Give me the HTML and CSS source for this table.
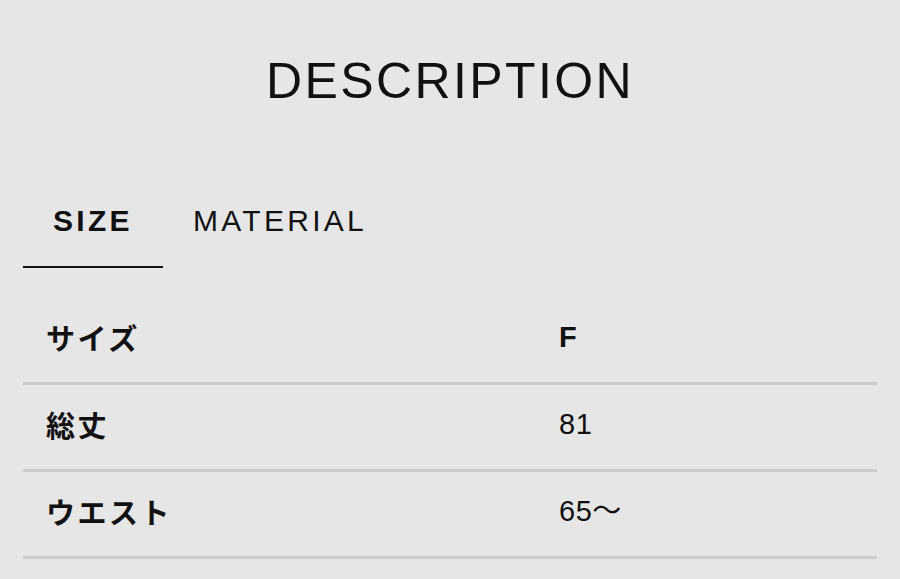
FILE: index.html
```html
<!DOCTYPE html>
<html lang="ja">
<head>
<meta charset="utf-8">
<title>Description</title>
<link rel="stylesheet" href="styles.css">
</head>
<body>
<main class="page">
  <h1 class="title">DESCRIPTION</h1>
  <nav class="tabs">
    <div class="tab tab-active">SIZE</div>
    <div class="tab">MATERIAL</div>
  </nav>
  <div class="table">
    <div class="row">
      <div class="label">サイズ</div>
      <div class="value value-bold">F</div>
    </div>
    <div class="row">
      <div class="label">総丈</div>
      <div class="value">81</div>
    </div>
    <div class="row">
      <div class="label">ウエスト</div>
      <div class="value">65〜</div>
    </div>
  </div>
</main>
</body>
</html>
```

FILE: styles.css
```css
html, body {
  margin: 0;
  padding: 0;
  background: #e6e6e6;
}

body {
  font-family: "Liberation Sans", Arial, "Noto Sans CJK JP", sans-serif;
  color: #111111;
}

.page {
  padding: 51px 23px 0 23px;
}

.title {
  margin: 0;
  font-size: 50px;
  line-height: 60px;
  font-weight: 400;
  letter-spacing: 2.4px;
  text-align: center;
  padding-left: 0;
}

.tabs {
  display: flex;
  margin-top: 92px;
}

.tab {
  font-size: 30px;
  line-height: 36px;
  letter-spacing: 3.3px;
  padding: 0 30px 27px 30px;
  border-bottom: 2px solid transparent;
}

.tab-active {
  font-weight: 700;
  border-bottom-color: #111111;
}

.table {
  margin-top: 30px;
}

.row {
  display: grid;
  grid-template-columns: 513px 1fr;
  align-items: center;
  height: 87px;
  padding: 0 0 6px 23px;
  box-sizing: border-box;
  border-bottom: 3px solid #cbcbcb;
}

.label {
  font-family: "Noto Sans CJK JP", sans-serif;
  font-weight: 700;
  font-size: 29px;
  letter-spacing: 2.5px;
  line-height: 36px;
}

.value {
  font-size: 29px;
  line-height: 36px;
  letter-spacing: 0.5px;
}

.value-bold {
  font-weight: 700;
}
```
